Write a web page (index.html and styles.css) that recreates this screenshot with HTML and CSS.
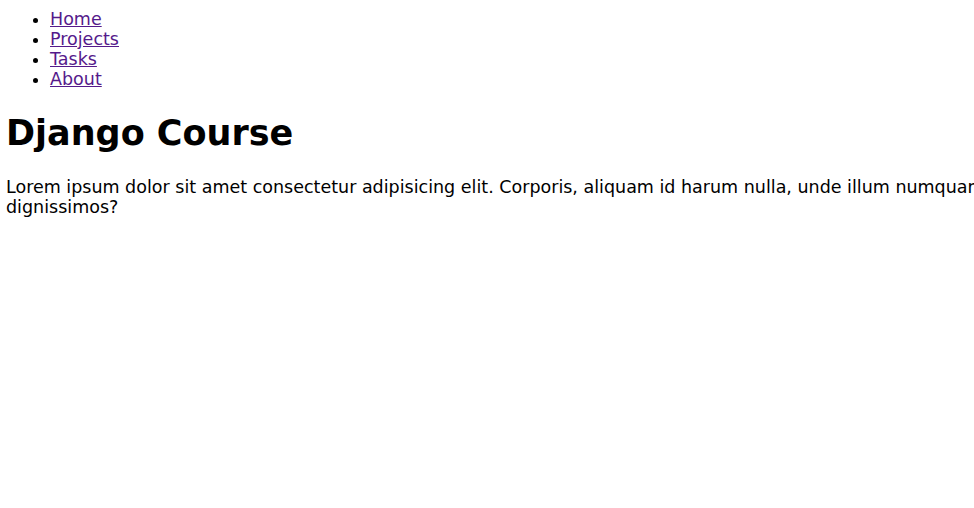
FILE: index.html
```
<!DOCTYPE html>
<html>
<head>
<meta charset="utf-8">
<link rel="stylesheet" href="styles.css">
<title>Django Course</title>
</head>
<body>
<nav class="nav">
<ul class="nav-list">
<li><a href="#">Home</a></li>
<li><a href="#">Projects</a></li>
<li><a href="#">Tasks</a></li>
<li><a href="#">About</a></li>
</ul>
</nav>
<main class="content">
<h1 class="title">Django Course</h1>
<p class="lead">Lorem ipsum dolor sit amet consectetur adipisicing elit. Corporis, aliquam id harum nulla, unde illum numquam quae dignissimos?</p>
</main>
</body>
</html>
```

FILE: styles.css
```
html { overflow: hidden; }
body {
  margin: 0;
  padding: 9px 0 0 6px;
  font-family: "DejaVu Sans", sans-serif;
  font-size: 17.5px;
  color: #000;
}
.nav-list {
  margin: 0;
  padding-left: 44px;
}
.nav-list a { color: #551a8b; }
.title {
  font-size: 35px;
  margin: 24px 0 24px;
}
.lead {
  width: 1080px;
  margin: 0;
}
```
